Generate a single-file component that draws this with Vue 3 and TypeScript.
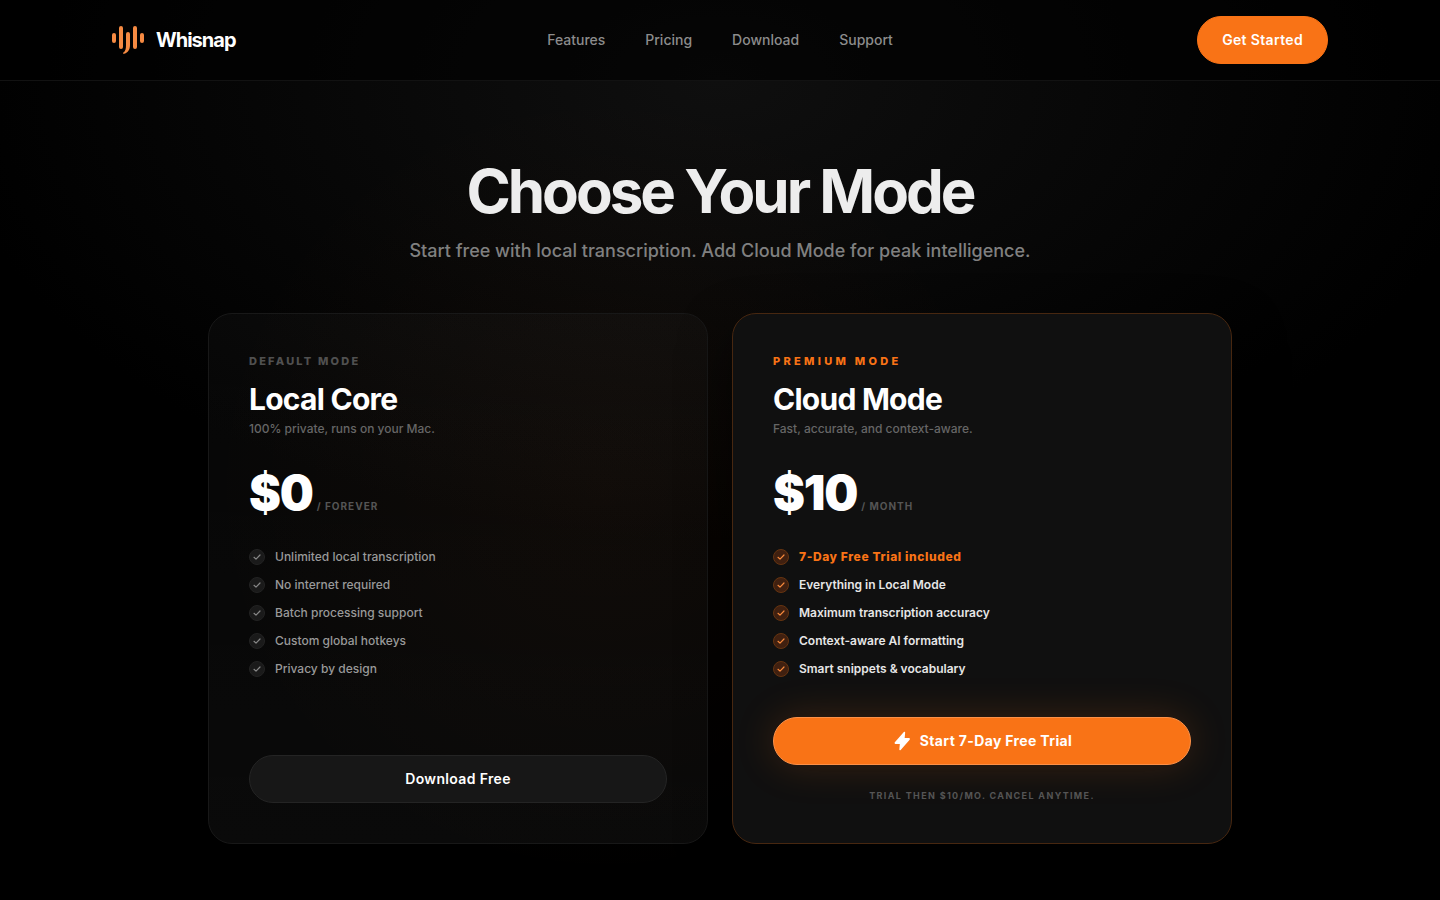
<script setup lang="ts">
interface Plan {
  id: string
  badge: string
  name: string
  tagline: string
  price: string
  period: string
  features: string[]
  cta: string
  note?: string
  premium: boolean
}

const links: string[] = ['Features', 'Pricing', 'Download', 'Support']

const plans: Plan[] = [
  {
    id: 'local',
    badge: 'Default Mode',
    name: 'Local Core',
    tagline: '100% private, runs on your Mac.',
    price: '$0',
    period: '/ forever',
    features: [
      'Unlimited local transcription',
      'No internet required',
      'Batch processing support',
      'Custom global hotkeys',
      'Privacy by design',
    ],
    cta: 'Download Free',
    premium: false,
  },
  {
    id: 'cloud',
    badge: 'Premium Mode',
    name: 'Cloud Mode',
    tagline: 'Fast, accurate, and context-aware.',
    price: '$10',
    period: '/ month',
    features: [
      '7-Day Free Trial included',
      'Everything in Local Mode',
      'Maximum transcription accuracy',
      'Context-aware AI formatting',
      'Smart snippets & vocabulary',
    ],
    cta: 'Start 7-Day Free Trial',
    note: 'Trial then $10/mo. Cancel anytime.',
    premium: true,
  },
]
</script>

<template>
  <div class="page">
    <header class="header">
      <div class="bar">
        <a class="brand" href="#">
          <svg class="logo" viewBox="0 0 32 32" aria-hidden="true">
            <rect x="0" y="9" width="4" height="10" rx="2" />
            <rect x="7" y="2" width="4" height="23" rx="2" />
            <path d="M14 10a2 2 0 0 1 4 0v11c0 5-2.500 8.200-6 8.700-1.200 0-1.300-.9-.5-1.300C13.500 27.200 14 24.500 14 21z" />
            <rect x="21" y="2" width="4" height="23" rx="2" />
            <rect x="28" y="9" width="4" height="10" rx="2" />
          </svg>
          <span>Whisnap</span>
        </a>
        <nav class="nav">
          <a v-for="link in links" :key="link" href="#">{{ link }}</a>
        </nav>
        <div class="actions">
          <button class="start" type="button">Get Started</button>
        </div>
      </div>
    </header>

    <main class="main">
      <h1>Choose Your Mode</h1>
      <p class="lead">Start free with local transcription. Add Cloud Mode for peak intelligence.</p>

      <div class="plans">
        <section v-for="plan in plans" :key="plan.id" class="card" :class="{ premium: plan.premium }">
          <p class="badge">{{ plan.badge }}</p>
          <h2>{{ plan.name }}</h2>
          <p class="tagline">{{ plan.tagline }}</p>
          <p class="price">
            <span class="amount">{{ plan.price }}</span>
            <span class="period">{{ plan.period }}</span>
          </p>
          <ul>
            <li v-for="feature in plan.features" :key="feature">
              <span class="tick">
                <svg viewBox="0 0 10 10" aria-hidden="true"><path d="M2 5.300 4 7.100 8 3" /></svg>
              </span>
              {{ feature }}
            </li>
          </ul>
          <div class="foot">
            <button class="cta" type="button">
              <svg v-if="plan.premium" viewBox="0 0 24 24" aria-hidden="true">
                <path d="M14.200 1.200c.7-.8 1.700-.4 1.600.6L15.200 8.500h5.200c1 0 1.500 1.100.8 1.900L10.400 22.800c-.7.800-1.700.4-1.600-.6L9.400 15.500H4.200c-1 0-1.500-1.100-.8-1.900z" />
              </svg>
              {{ plan.cta }}
            </button>
            <p v-if="plan.note" class="note">{{ plan.note }}</p>
          </div>
        </section>
      </div>
    </main>
  </div>
</template>

<style>
body {
  margin: 0;
  background: #000;
}
</style>

<style scoped>
.page {
  min-height: 100vh;
  box-sizing: border-box;
  color: #fff;
  font-family: Inter, 'Liberation Sans', sans-serif;
  background:
    radial-gradient(circle 400px at 42% 54%, rgba(249, 115, 22, 0.035), transparent),
    radial-gradient(ellipse 54% 460px at 50% 80px, #0f0f0f, transparent),
    #000;
}
h1,
h2,
p,
ul {
  margin: 0;
  padding: 0;
}
a {
  color: inherit;
  text-decoration: none;
}
button {
  font: inherit;
  cursor: pointer;
}
.header {
  border-bottom: 1px solid #121212;
  background: rgba(0, 0, 0, 0.6);
}
.bar {
  display: grid;
  grid-template-columns: 1fr auto 1fr;
  align-items: center;
  box-sizing: border-box;
  max-width: 1280px;
  height: 80px;
  margin: 0 auto;
  padding: 0 32px;
}
.brand {
  display: flex;
  align-items: center;
  gap: 12px;
  font-size: 20px;
  font-weight: 700;
  letter-spacing: -0.05em;
}
.logo {
  width: 32px;
  height: 32px;
  fill: #f58a42;
}
.nav {
  display: flex;
  gap: 40px;
  color: #8c8c8c;
  font-size: 14px;
  line-height: 20px;
  font-weight: 500;
}
.actions {
  display: flex;
  justify-content: flex-end;
}
.start {
  height: 48px;
  padding: 0 24px;
  border: 1px solid #f97316;
  border-radius: 24px;
  background: #f97316;
  color: #fff;
  font-size: 14px;
  line-height: 20px;
  font-weight: 600;
  letter-spacing: 0.025em;
}
.main {
  max-width: 1024px;
  margin: 0 auto;
  padding: 80px 24px 56px;
  text-align: center;
}
h1 {
  color: #ededed;
  font-size: 60px;
  line-height: 60px;
  font-weight: 700;
  letter-spacing: -0.05em;
}
.lead {
  margin-top: 16px;
  color: #808080;
  font-size: 18px;
  line-height: 28px;
  font-weight: 500;
}
.plans {
  display: grid;
  grid-template-columns: repeat(auto-fit, minmax(min(100%, 400px), 1fr));
  gap: 24px;
  margin-top: 48px;
  text-align: left;
}
.card {
  display: flex;
  flex-direction: column;
  padding: 40px;
  border: 1px solid #181818;
  border-radius: 24px;
  background: linear-gradient(rgba(255, 255, 255, 0.025), rgba(255, 255, 255, 0.04));
}
.card.premium {
  border-color: #472710;
  background: #101010;
  box-shadow: 0 20px 50px rgba(0, 0, 0, 0.5);
}
.badge {
  color: #505050;
  font-size: 11px;
  line-height: 15px;
  font-weight: 800;
  letter-spacing: 0.2em;
  text-transform: uppercase;
}
.premium .badge {
  color: #f97316;
  letter-spacing: 0.3em;
}
h2 {
  margin-top: 12px;
  font-size: 30px;
  line-height: 36px;
  font-weight: 700;
  letter-spacing: -0.025em;
}
.tagline {
  margin-top: 4px;
  color: #666;
  font-size: 12px;
  line-height: 16px;
  font-weight: 500;
}
.price {
  display: flex;
  align-items: baseline;
  gap: 4px;
  margin-top: 32px;
}
.amount {
  font-size: 48px;
  line-height: 48px;
  font-weight: 900;
  letter-spacing: -0.025em;
}
.period {
  color: #555;
  font-size: 10px;
  font-weight: 700;
  letter-spacing: 0.1em;
  text-transform: uppercase;
}
ul {
  display: flex;
  flex-direction: column;
  gap: 12px;
  margin: 32px 0 40px;
  list-style: none;
}
li {
  display: flex;
  align-items: center;
  gap: 10px;
  color: #999;
  font-size: 12px;
  line-height: 16px;
  font-weight: 500;
}
.premium li {
  color: #e6e6e6;
  font-weight: 600;
}
.premium li:first-child {
  color: #f97316;
  font-weight: 800;
  letter-spacing: 0.05em;
}
.tick {
  display: flex;
  align-items: center;
  justify-content: center;
  box-sizing: border-box;
  width: 16px;
  height: 16px;
  border: 1px solid #222;
  border-radius: 50%;
  background: #1a1a1a;
  color: #888;
}
.premium .tick {
  border-color: #663410;
  background: #402010;
  color: #f98a3c;
}
.tick svg {
  width: 10px;
  height: 10px;
  fill: none;
  stroke: currentColor;
  stroke-width: 1.2;
  stroke-linecap: round;
  stroke-linejoin: round;
}
.foot {
  margin-top: auto;
}
.cta {
  display: flex;
  align-items: center;
  justify-content: center;
  gap: 8px;
  box-sizing: border-box;
  width: 100%;
  height: 48px;
  border: 1px solid #242424;
  border-radius: 24px;
  background: #171717;
  color: #fff;
  font-size: 14px;
  line-height: 20px;
  font-weight: 600;
  letter-spacing: 0.025em;
}
.premium .cta {
  border-color: #fb9048;
  background: #f97316;
  box-shadow: 0 0 40px rgba(249, 115, 22, 0.18);
  font-weight: 700;
}
.cta svg {
  width: 20px;
  height: 20px;
  fill: currentColor;
}
.note {
  margin-top: 24px;
  color: #555;
  font-size: 9px;
  line-height: 14px;
  font-weight: 700;
  letter-spacing: 0.15em;
  text-align: center;
  text-transform: uppercase;
}
</style>
